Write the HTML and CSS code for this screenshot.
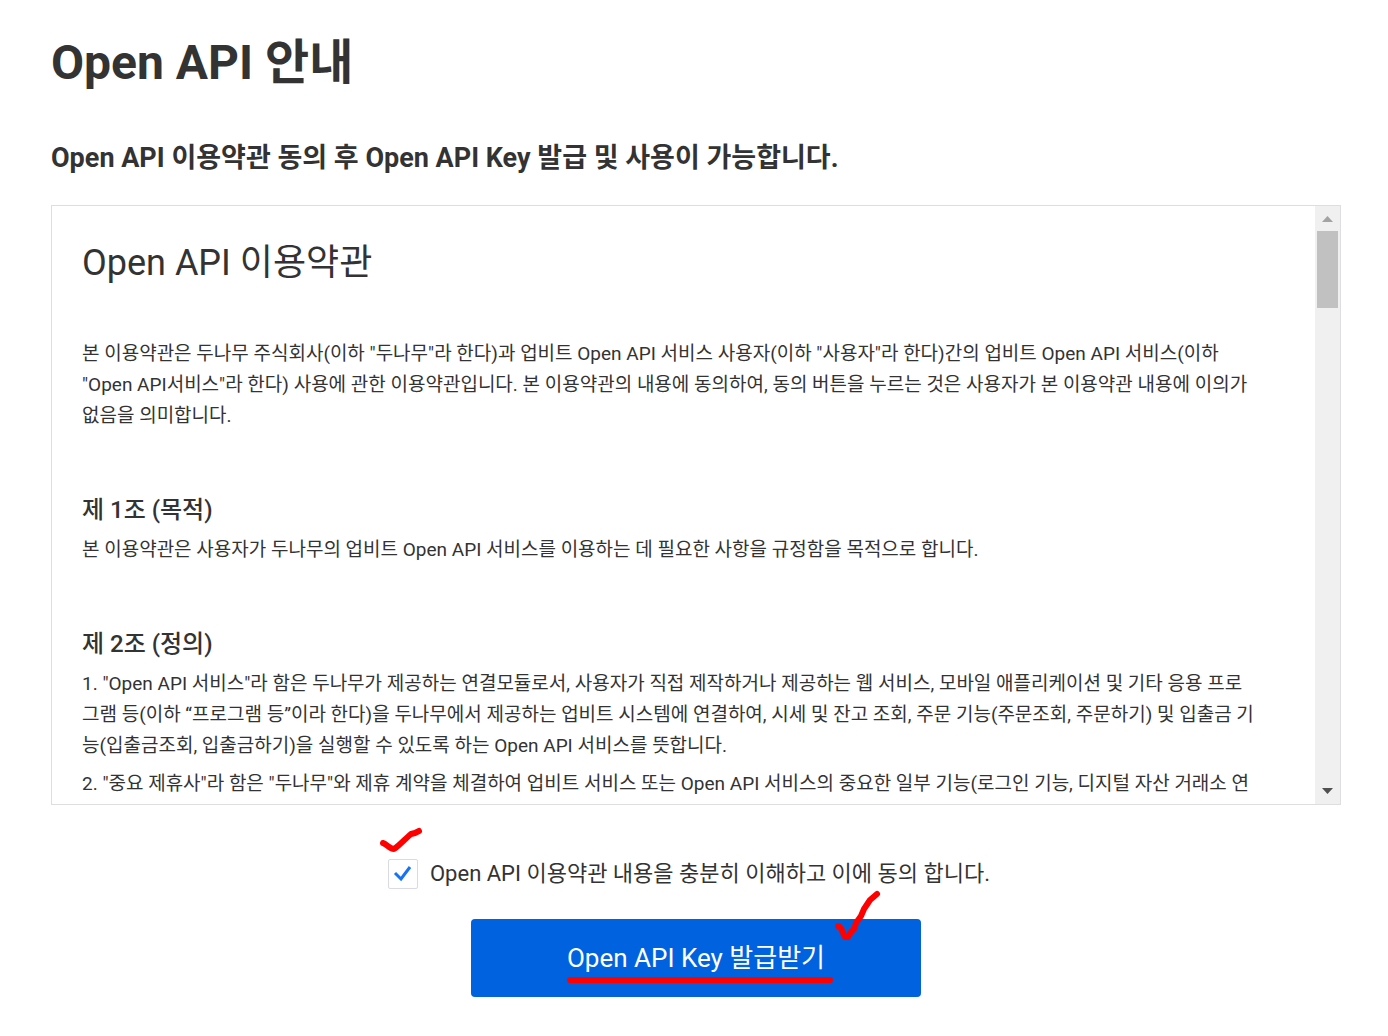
FILE: index.html
```
<!DOCTYPE html>
<html lang="ko">
<head>
  <meta charset="UTF-8" />
  <meta name="viewport" content="width=device-width, initial-scale=1" />
  <title>Open API 안내</title>
  <link rel="stylesheet" href="styles.css">
</head>
<body>

  <main class="page">
    <h1>Open API 안내</h1>
    <h2>Open API 이용약관 동의 후 Open API Key 발급 및 사용이 가능합니다.</h2>

    <!-- Terms box -->
    <section class="terms">
      <div class="terms-text">
        <h3 class="terms-title">Open API 이용약관</h3>
        <p>본 이용약관은 두나무 주식회사(이하 "두나무"라 한다)과 업비트 Open API 서비스 사용자(이하 "사용자"라 한다)간의 업비트 Open API 서비스(이하<br>"Open API서비스"라 한다) 사용에 관한 이용약관입니다. 본 이용약관의 내용에 동의하여, 동의 버튼을 누르는 것은 사용자가 본 이용약관 내용에 이의가<br>없음을 의미합니다.</p>

        <h4>제 1조 (목적)</h4>
        <p>본 이용약관은 사용자가 두나무의 업비트 Open API 서비스를 이용하는 데 필요한 사항을 규정함을 목적으로 합니다.</p>

        <h4>제 2조 (정의)</h4>
        <p>1. "Open API 서비스"라 함은 두나무가 제공하는 연결모듈로서, 사용자가 직접 제작하거나 제공하는 웹 서비스, 모바일 애플리케이션 및 기타 응용 프로<br>그램 등(이하 “프로그램 등”이라 한다)을 두나무에서 제공하는 업비트 시스템에 연결하여, 시세 및 잔고 조회, 주문 기능(주문조회, 주문하기) 및 입출금 기<br>능(입출금조회, 입출금하기)을 실행할 수 있도록 하는 Open API 서비스를 뜻합니다.</p>
        <p>2. "중요 제휴사"라 함은 "두나무"와 제휴 계약을 체결하여 업비트 서비스 또는 Open API 서비스의 중요한 일부 기능(로그인 기능, 디지털 자산 거래소 연</p>
      </div>
      <div class="scrollbar" aria-hidden="true">
        <svg class="arrow" viewBox="0 0 11 6"><path d="M0 6L5.500 0L11 6Z" fill="#a3a3a3"/></svg>
        <div class="thumb"></div>
        <svg class="arrow arrow-down" viewBox="0 0 11 6"><path d="M0 0L5.500 6L11 0Z" fill="#505050"/></svg>
      </div>
    </section>

    <!-- Agreement -->
    <div class="agree">
      <span class="check-wrap">
        <input type="checkbox" id="agree" checked>
        <svg class="check" viewBox="0 0 30 30"><path d="M7 14L13 20L22 8" fill="none" stroke="#1772f5" stroke-width="3"/></svg>
      </span>
      <label for="agree">Open API 이용약관 내용을 충분히 이해하고 이에 동의 합니다.</label>
      <svg class="mark mark-agree" viewBox="0 0 46 28"><path d="M5 16C9 17 11 22 16 22C21 19 28 11 33 7L37 6L41 4" /></svg>
    </div>

    <button type="button" class="issue-btn">
      <span class="issue-text">Open API Key 발급받기</span>
      <svg class="mark mark-btn" viewBox="0 0 50 52"><path d="M7 36C11 37 11 42 14 47H17L20 42L23 39L25 33L30 26L33 19L39 10L46 4" /></svg>
    </button>
  </main>

</body>
</html>
```
FILE: styles.css
```
* {
  box-sizing: border-box;
}

body {
  margin: 0;
  background-color: white;
  color: #333;
  font-family: Roboto, "Noto Sans CJK KR", sans-serif;
}

h1, h2, h3, h4, p {
  margin: 0;
}

.page {
  padding: 27px 47px 39px 51px;
}

h1 {
  font-size: 48px;
  line-height: 72px;
  font-weight: bold;
}

h2 {
  margin-top: 39px;
  margin-bottom: 27px;
  font-size: 27px;
  line-height: 40px;
  font-weight: bold;
}

/* Terms box */
.terms {
  display: flex;
  height: 600px;
  border: 1px solid #dddee2;
}

.terms-text {
  flex: 1;
  padding: 31px 30px 0;
  overflow: hidden;
}

.terms-title {
  margin-bottom: 49px;
  font-size: 36px;
  line-height: 52px;
  font-weight: normal;
}

.terms-text p {
  margin-bottom: 7px;
  font-size: 19px;
  line-height: 31px;
}

.terms-text h4 {
  margin-top: 61px;
  margin-bottom: 6px;
  font-size: 24px;
  line-height: 36px;
  font-weight: 500;
}

.scrollbar {
  display: flex;
  flex-direction: column;
  align-items: center;
  width: 25px;
  padding: 10px 0;
  background-color: #f0f0f0;
}

.arrow {
  width: 11px;
  height: 6px;
}

.arrow-down {
  margin-top: auto;
}

.thumb {
  width: 21px;
  height: 77px;
  margin-top: 9px;
  background-color: #c1c1c1;
}

/* Agreement */
.agree {
  position: relative;
  display: flex;
  align-items: center;
  gap: 12px;
  width: fit-content;
  margin: 52px auto 0;
  padding-right: 14px;
  font-size: 22px;
  line-height: 34px;
}

.check-wrap {
  position: relative;
  display: flex;
}

.check-wrap input {
  appearance: none;
  width: 30px;
  height: 30px;
  margin: 0;
  border: 1px solid #d8dae6;
  border-radius: 2px;
  background-color: white;
}

.check {
  position: absolute;
  top: 0;
  left: 0;
  width: 30px;
  height: 30px;
  display: none;
  pointer-events: none;
}

.check-wrap input:checked + .check {
  display: block;
}

.issue-btn {
  position: relative;
  display: block;
  width: 450px;
  height: 78px;
  margin: 28px auto 0;
  border: none;
  border-radius: 4px;
  background-color: #0062df;
  color: white;
  font-family: inherit;
  font-size: 26px;
  line-height: 38px;
  cursor: pointer;
}

.issue-text {
  position: relative;
}

.issue-text::after {
  content: "";
  position: absolute;
  left: 0;
  right: -8px;
  bottom: -10px;
  height: 6px;
  border-radius: 3px;
  background-color: red;
}

/* Red pen marks */
.mark {
  position: absolute;
  fill: none;
  stroke: red;
  stroke-width: 6;
  stroke-linecap: round;
  stroke-linejoin: round;
  pointer-events: none;
  overflow: visible;
}

.mark-agree {
  top: -30px;
  left: -10px;
  width: 46px;
  height: 28px;
}

.mark-btn {
  top: -29px;
  right: 40px;
  width: 50px;
  height: 52px;
}
```
